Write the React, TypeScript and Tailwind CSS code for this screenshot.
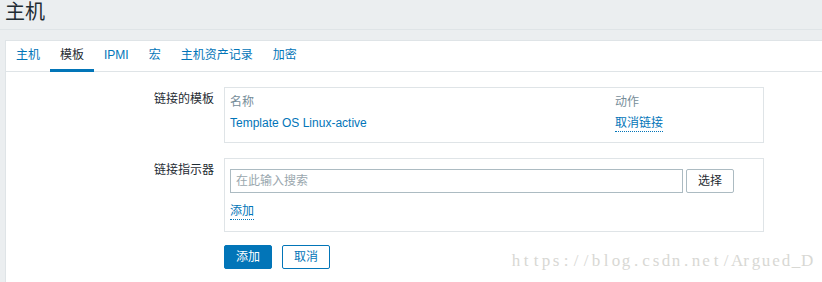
const tabs = ["主机", "模板", "IPMI", "宏", "主机资产记录", "加密"];
const mark = "https://blog.csdn.net/Argued_D";

export default function App() {
  return (
    <div className="relative h-[282px] overflow-hidden bg-[#ebeef0] font-['Liberation_Sans','Noto_Sans_CJK_SC',sans-serif] text-[12px] text-[#1f2c33]">
      <header className="h-[30px] border-b border-[#dfe4e7] px-[5px]">
        <h1 className="text-[20px] leading-[24px]">主机</h1>
      </header>

      <div className="ml-[5px] mt-[10px] h-[242px] border-l border-t border-[#dfe4e7] bg-white">
        <ul className="flex h-[31px] border-b border-[#dfe4e7]">
          {tabs.map((t) => (
            <li
              key={t}
              className={
                t === "模板"
                  ? "-mb-px border-b-[3px] border-[#0275b8] px-[10px] leading-[28px] text-[#1f2c33]"
                  : "px-[10px] leading-[28px] text-[#0275b8]"
              }
            >
              {t}
            </li>
          ))}
        </ul>

        <div className="pt-[15px]">
          <div className="flex">
            <div className="w-[208px] pt-[4px] text-right leading-[16px]">链接的模板</div>
            <div className="ml-[10px] h-[56px] w-[540px] border border-[#dfe4e7] px-[5px] pt-[6px] leading-[16px]">
              <div className="flex text-[#768d99]">
                <div className="w-[385px]">名称</div>
                <div>动作</div>
              </div>
              <div className="mt-[5px] flex">
                <div className="w-[385px] text-[#0275b8]">Template OS Linux-active</div>
                <div>
                  <span className="inline-block border-b border-dotted border-[#0275b8] leading-[15px] text-[#0275b8]">
                    取消链接
                  </span>
                </div>
              </div>
            </div>
          </div>

          <div className="mt-[15px] flex">
            <div className="w-[208px] pt-[4px] text-right leading-[16px]">链接指示器</div>
            <div className="ml-[10px] h-[74px] w-[540px] border border-[#dfe4e7] px-[5px] pt-[10px]">
              <div className="flex gap-[3px]">
                <input
                  placeholder="在此输入搜索"
                  className="h-[24px] w-[453px] border border-[#acbbc2] px-[5px] text-[12px] text-[#1f2c33] outline-none placeholder:text-[#9aa7ae]"
                />
                <button className="h-[24px] w-[48px] rounded-[2px] border border-[#acbbc2] bg-white text-[12px] text-[#1f2c33]">
                  选择
                </button>
              </div>
              <div className="mt-[10px] leading-[16px]">
                <span className="inline-block border-b border-dotted border-[#0275b8] leading-[15px] text-[#0275b8]">
                  添加
                </span>
              </div>
            </div>
          </div>

          <div className="ml-[218px] mt-[13px] flex gap-[10px]">
            <button className="h-[24px] w-[48px] rounded-[2px] border border-[#0275b8] bg-[#0275b8] text-[12px] text-white">
              添加
            </button>
            <button className="h-[24px] w-[48px] rounded-[2px] border border-[#0275b8] bg-white text-[12px] text-[#0275b8]">
              取消
            </button>
          </div>
        </div>
      </div>

      {/* watermark over the page, serif glyphs in fixed 10px cells */}
      <div className="pointer-events-none absolute left-[511px] top-[251px] flex font-['Liberation_Serif',serif] text-[17px] leading-[20px] text-[#d8d8d4]">
        {mark.split("").map((c, i) => (
          <span key={i} className="inline-block w-[10px] text-center">
            {c}
          </span>
        ))}
      </div>
    </div>
  );
}
